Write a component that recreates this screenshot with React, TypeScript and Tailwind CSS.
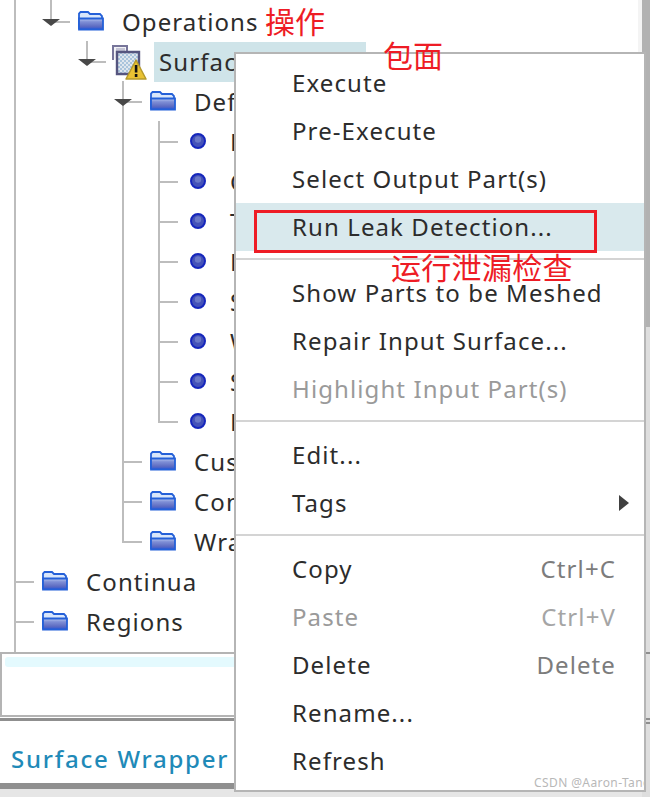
const FONT = "font-['Noto_Sans','Open_Sans',sans-serif]"

function Folder() {
    return (
        <svg width="26" height="20" viewBox="0 0 26 20" className="-mt-[2px] shrink-0">
            <defs>
                <linearGradient id="folderBody" x1="0" y1="0" x2="0" y2="1">
                    <stop offset="0" stopColor="#b9c9f0" />
                    <stop offset="0.3" stopColor="#7f8fd6" />
                    <stop offset="0.7" stopColor="#5f6dc2" />
                    <stop offset="1" stopColor="#2f55d2" />
                </linearGradient>
            </defs>
            <path d="M1 18V2.5L2.5 1H10l2 2h10l2 2v3H3" fill="#d8e6fb" stroke="#2460d8" strokeWidth="1.8" />
            <path d="M1 7.5h24v11H1z" fill="url(#folderBody)" stroke="#2460d8" strokeWidth="1.8" />
        </svg>
    )
}

function Dot() {
    return (
        <svg width="16" height="16" viewBox="0 0 16 16" className="-mt-[2px] shrink-0">
            <circle cx="8" cy="8" r="7" fill="#4452b8" stroke="#1526bc" strokeWidth="2" />
            <circle cx="8" cy="6.5" r="3.2" fill="#6a78c8" />
        </svg>
    )
}

function WarnIcon() {
    return (
        <svg width="36" height="36" viewBox="0 0 36 36" className="shrink-0">
            <defs>
                <pattern id="checker" width="4" height="4" patternUnits="userSpaceOnUse">
                    <rect width="4" height="4" fill="#dfe6ee" />
                    <rect width="2" height="2" fill="#a9c4dc" />
                    <rect x="2" y="2" width="2" height="2" fill="#a9c4dc" />
                </pattern>
            </defs>
            <path d="M1 16V2h14v5" fill="#f2f2f6" stroke="#77759a" strokeWidth="2" />
            <path d="M4 4h9v3H4z" fill="#c4c4d4" />
            <path d="M5 8h22v22H5z" fill="url(#checker)" stroke="#55557f" strokeWidth="2.4" />
            <path d="M24 16l10 19H14z" fill="#e9c233" stroke="#b59a2c" strokeWidth="1.5" strokeLinejoin="round" />
            <path d="M22.8 21h2.6v7.5h-2.6zM22.8 30h2.6v3h-2.6z" fill="#111" />
        </svg>
    )
}

// Connector lines of the tree, drawn over the rows
function TreeLines() {
    const lines = [
        'M15 0V652', 'M15 582H34', 'M15 622H34',
        'M51 0V20', 'M51 22H70',
        'M87 41V60', 'M87 62H106',
        'M123 81V543', 'M123 102H142', 'M123 462H142', 'M123 502H142', 'M123 542H142',
        'M159 121V423', 'M159 142H178', 'M159 182H178', 'M159 222H178', 'M159 262H178',
        'M159 302H178', 'M159 342H178', 'M159 382H178', 'M159 422H178',
    ]
    const arrows = [[51, 20], [87, 60], [123, 100]]
    return (
        <svg width="200" height="652" className="absolute top-0 left-0">
            {lines.map((d) => (
                <path key={d} d={d} stroke="#bdbdbd" strokeWidth="2" fill="none" />
            ))}
            {arrows.map(([x, y]) => (
                <path key={x} d={`M${x - 9} ${y - 1}h18l-9 7z`} fill="#484848" />
            ))}
        </svg>
    )
}

function Row({ indent, label, clipped }: { indent: string; label: string; clipped?: boolean }) {
    return (
        <div className={`flex h-10 items-center ${clipped ? 'w-[234px] overflow-hidden' : ''} ${indent}`}>
            <Folder />
            <span className="ml-[18px] whitespace-nowrap">{label}</span>
        </div>
    )
}

function MenuItem({ label, shortcut, disabled, active, arrow }: { label: string; shortcut?: string; disabled?: boolean; active?: boolean; arrow?: boolean }) {
    return (
        <div className={`flex h-12 items-center pl-[56px] pr-[28px] ${active ? 'bg-[#d9e9ed]' : ''} ${disabled ? 'text-[#9a9a9a]' : 'text-[#2c2c2c]'}`}>
            <span className="flex-1 whitespace-nowrap">{label}</span>
            {shortcut && <span className={disabled ? 'text-[#a5a5a5]' : 'text-[#7c7c7c]'}>{shortcut}</span>}
            {arrow && (
                <svg width="10" height="16" viewBox="0 0 10 16" className="-mr-[13px]">
                    <path d="M0 0l10 8-10 8z" fill="#404040" />
                </svg>
            )}
        </div>
    )
}

function Separator() {
    return <div className="mt-[7px] mb-[9px] h-[2px] bg-[#d4d4d4]" />
}

export default function App() {
    return (
        <div className={`relative flex h-[797px] w-[650px] overflow-hidden bg-[#e6e6e6] text-[24px] leading-none tracking-[1.1px] text-[#2c2c2c] ${FONT}`}>
            <div className="flex h-[789px] w-[642px] shrink-0 flex-col bg-white">
                {/* Tree */}
                <div className="relative h-[652px] shrink-0 border-r-4 border-[#f4f4f4] pt-[2px]">
                    <TreeLines />
                    <div className="relative">
                        <Row indent="pl-[78px]" label="Operations" />
                        <div className="flex h-10 items-center pl-[112px]">
                            <WarnIcon />
                            <div className="ml-[6px] flex h-10 w-[212px] items-center bg-[#cfe4e9] pl-[5px]">
                                <span className="w-[75px] overflow-hidden whitespace-nowrap">Surface</span>
                            </div>
                        </div>
                        <Row indent="pl-[150px]" label="Default" clipped />
                        {['Base Size', 'Geometric', 'Target', 'Minimum', 'Surface', 'Wrapper', 'Scale', 'Feature'].map((t) => (
                            <div key={t} className="flex h-10 w-[234px] items-center overflow-hidden pl-[190px]">
                                <Dot />
                                <span className="ml-[24px] whitespace-nowrap">{t}</span>
                            </div>
                        ))}
                        <Row indent="pl-[150px]" label="Custom" clipped />
                        <Row indent="pl-[150px]" label="Contact" clipped />
                        <Row indent="pl-[150px]" label="Wrapper" clipped />
                        <Row indent="pl-[42px]" label="Continua" />
                        <Row indent="pl-[42px]" label="Regions" />
                    </div>
                </div>

                {/* Empty lower panel */}
                <div className="h-[65px] shrink-0 border-2 border-[#b4b4b4] p-[3px]">
                    <div className="h-[10px] rounded-[3px] bg-[#e4fafe]" />
                </div>

                {/* Properties title */}
                <div className="mt-[1px] flex flex-1 items-end border-t-[3px] border-[#8f8f8f] pb-[12px] pl-[11px] font-medium tracking-[1.75px] text-[#1f8ab8]">
                    Surface Wrapper
                </div>
                <div className="h-[6px] shrink-0 bg-[#8f8f8f]" />
            </div>

            {/* Scrollbar */}
            <div className="flex w-[8px] shrink-0 flex-col">
                <div className="h-[327px] bg-[#b2b2b2]" />
                <div className="h-[325px] bg-[#dedede]" />
                <div className="h-[2px] bg-[#8f8f8f]" />
                <div className="h-[64px] bg-[#dedede]" />
                <div className="h-[2px] bg-[#8f8f8f]" />
                <div className="h-[2px] bg-[#dedede]" />
                <div className="h-[2px] bg-[#8f8f8f]" />
                <div className="flex-1 bg-[#dedede]" />
            </div>

            {/* Context menu */}
            <div className="absolute top-[52px] left-[234px] w-[412px] border-2 border-[#b5b5b5] bg-white py-[5px]">
                <MenuItem label="Execute" />
                <MenuItem label="Pre-Execute" />
                <MenuItem label="Select Output Part(s)" />
                <MenuItem label="Run Leak Detection..." active />
                <Separator />
                <MenuItem label="Show Parts to be Meshed" />
                <MenuItem label="Repair Input Surface..." />
                <MenuItem label="Highlight Input Part(s)" disabled />
                <Separator />
                <MenuItem label="Edit..." />
                <MenuItem label="Tags" arrow />
                <Separator />
                <MenuItem label="Copy" shortcut="Ctrl+C" />
                <MenuItem label="Paste" shortcut="Ctrl+V" disabled />
                <MenuItem label="Delete" shortcut="Delete" />
                <MenuItem label="Rename..." />
                <MenuItem label="Refresh" />
            </div>

            {/* Red annotations */}
            <div className="absolute top-[210px] left-[254px] h-[43px] w-[343px] border-[3px] border-[#ee1c25]" />
            <span className="absolute top-[3px] left-[265px] font-['Noto_Sans_CJK_SC',sans-serif] text-[30px] leading-[34px] tracking-normal text-[#ee1c25]">操作</span>
            <span className="absolute top-[37px] left-[383px] font-['Noto_Sans_CJK_SC',sans-serif] text-[30px] leading-[34px] tracking-normal text-[#ee1c25]">包面</span>
            <span className="absolute top-[249px] left-[391px] font-['Noto_Sans_CJK_SC',sans-serif] text-[30px] leading-[34px] tracking-[0.3px] text-[#ee1c25]">运行泄漏检查</span>

            <span className="absolute top-[776px] left-[534px] w-[111px] overflow-hidden whitespace-nowrap text-[12px] leading-[14px] tracking-[0.4px] text-[#b8b8b8]">CSDN @Aaron-Tang</span>
        </div>
    )
}
